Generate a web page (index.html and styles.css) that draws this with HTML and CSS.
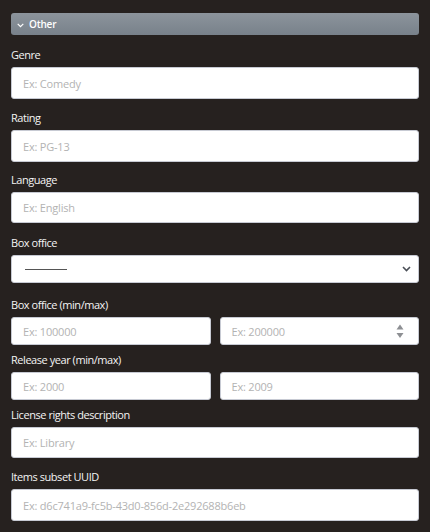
FILE: index.html
```html
<!DOCTYPE html>
<html lang="en">
<head>
<meta charset="utf-8">
<title>Other</title>
<link rel="stylesheet" href="styles.css">
</head>
<body>
<div class="panel">
  <div class="section-bar">
    <svg class="bar-chevron" width="7" height="5" viewBox="0 0 7 5"><path d="M0.7 0.8 L3.5 3.6 L6.3 0.8" fill="none" stroke="#fff" stroke-width="1.2"/></svg>
    <span class="bar-title">Other</span>
  </div>

  <div class="field gap-12">
    <label class="label">Genre</label>
    <div class="input tall"><span class="ph">Ex: Comedy</span></div>
  </div>

  <div class="field gap-11">
    <label class="label">Rating</label>
    <div class="input tall"><span class="ph">Ex: PG-13</span></div>
  </div>

  <div class="field gap-10">
    <label class="label">Language</label>
    <div class="input mid"><span class="ph">Ex: English</span></div>
  </div>

  <div class="field gap-12">
    <label class="label">Box office</label>
    <div class="input short select">
      <span class="dash"></span>
      <svg class="sel-chevron" width="9" height="6" viewBox="0 0 9 6"><path d="M1 1 L4.5 4.5 L8 1" fill="none" stroke="#4a4f57" stroke-width="1.6"/></svg>
    </div>
  </div>

  <div class="field gap-14">
    <label class="label">Box office (min/max)</label>
    <div class="pair">
      <div class="input short"><span class="ph">Ex: 100000</span></div>
      <div class="input short spin-host">
        <span class="ph">Ex: 200000</span>
        <svg class="spinner" width="8" height="15" viewBox="0 0 8 15"><path d="M4 0.5 L7.5 5.5 L0.5 5.5 Z" fill="#8d8f93"/><path d="M0.5 9 L7.5 9 L4 14 Z" fill="#8d8f93"/></svg>
      </div>
    </div>
  </div>

  <div class="field gap-7">
    <label class="label">Release year (min/max)</label>
    <div class="pair">
      <div class="input short"><span class="ph">Ex: 2000</span></div>
      <div class="input short"><span class="ph">Ex: 2009</span></div>
    </div>
  </div>

  <div class="field gap-7">
    <label class="label">License rights description</label>
    <div class="input mid"><span class="ph">Ex: Library</span></div>
  </div>

  <div class="field gap-11">
    <label class="label">Items subset UUID</label>
    <div class="input tall"><span class="ph">Ex: d6c741a9-fc5b-43d0-856d-2e292688b6eb</span></div>
  </div>
</div>
</body>
</html>
```

FILE: styles.css
```css
html, body {
  margin: 0;
  padding: 0;
  background: #26211f;
}

body {
  font-family: "Open Sans", "Noto Sans", sans-serif;
  font-size: 11px;
  color: #f2f2f2;
}

.panel {
  display: flex;
  flex-direction: column;
  padding: 13px 11px 0 11px;
}

.section-bar {
  height: 22px;
  border-radius: 3px;
  background: linear-gradient(#8c949c, #78818a);
  display: flex;
  align-items: center;
  padding-left: 6px;
  gap: 5px;
  box-sizing: border-box;
}

.bar-chevron {
  margin-top: 2px;
}

.bar-title {
  color: #ffffff;
  font-size: 10px;
  font-weight: 600;
  letter-spacing: -0.2px;
}

.field {
  display: flex;
  flex-direction: column;
}

.gap-7 { margin-top: 7px; }
.gap-10 { margin-top: 10px; }
.gap-11 { margin-top: 11px; }
.gap-12 { margin-top: 12px; }
.gap-14 { margin-top: 14px; }

.label {
  display: block;
  line-height: 16px;
  height: 16px;
  margin-bottom: 4px;
  color: #f4f4f4;
  letter-spacing: -0.45px;
}

.input {
  position: relative;
  box-sizing: border-box;
  background: #ffffff;
  border: 1px solid #c7cad3;
  border-radius: 3px;
  display: flex;
  align-items: center;
  padding-left: 11px;
  padding-right: 10px;
}

.tall { height: 32px; }
.mid { height: 31px; }
.short { height: 28px; }

.ph {
  color: #b3b3b3;
  font-size: 11px;
  letter-spacing: -0.2px;
  white-space: nowrap;
}

.select {
  justify-content: space-between;
  padding-left: 13px;
  padding-right: 7px;
}

.dash {
  display: block;
  width: 42px;
  height: 1px;
  background: #555555;
}

.pair {
  display: grid;
  grid-template-columns: 1fr 1fr;
  gap: 9px;
}

.spinner {
  position: absolute;
  right: 14px;
  top: 6px;
}
```
